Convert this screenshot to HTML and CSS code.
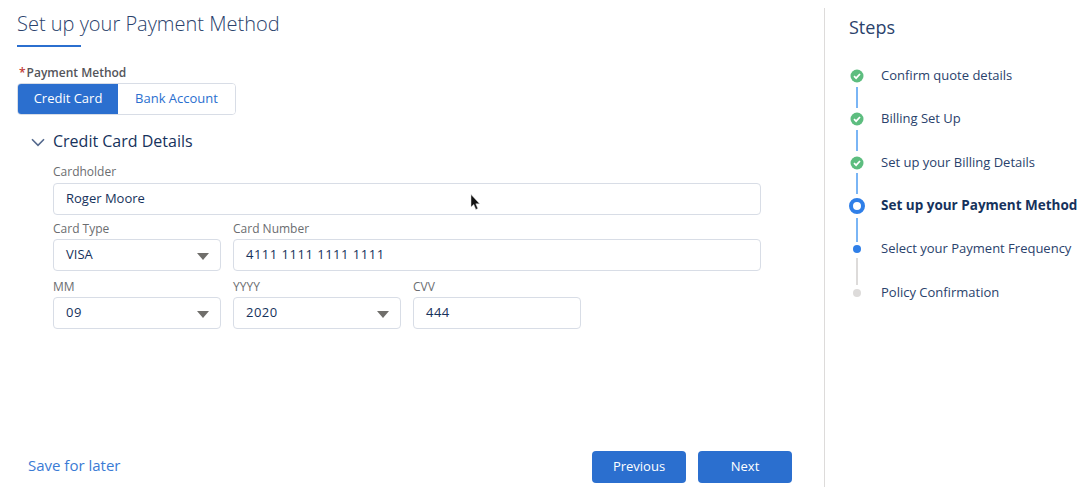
FILE: index.html
```html
<!DOCTYPE html>
<html lang="en">
<head>
    <meta charset="UTF-8">
    <meta name="viewport" content="width=device-width, initial-scale=1.0">
    <title>Set up your Payment Method</title>
    <link rel="stylesheet" href="styles.css">
</head>
<body>
    <div class="app">
        <main class="main">
            <h1 class="title">Set up your Payment Method</h1>
            <div class="title-line"></div>

            <div class="method-label"><span class="required">*</span>Payment Method</div>
            <div class="toggle">
                <button class="toggle-btn active">Credit Card</button>
                <button class="toggle-btn">Bank Account</button>
            </div>

            <div class="section-head">
                <svg class="chevron" width="14" height="9" viewBox="0 0 14 9"><path d="M1 1.2 7 7.4 13 1.2" fill="none" stroke="#54698d" stroke-width="1.6"/></svg>
                <h2>Credit Card Details</h2>
            </div>

            <div class="form">
                <div class="row">
                    <div class="field wide">
                        <label>Cardholder</label>
                        <div class="input">Roger Moore</div>
                    </div>
                </div>
                <div class="row">
                    <div class="field small">
                        <label>Card Type</label>
                        <div class="input select">VISA<span class="arrow"></span></div>
                    </div>
                    <div class="field wide">
                        <label>Card Number</label>
                        <div class="input digits">4111 1111 1111 1111</div>
                    </div>
                </div>
                <div class="row">
                    <div class="field small">
                        <label>MM</label>
                        <div class="input select digits">09<span class="arrow"></span></div>
                    </div>
                    <div class="field small">
                        <label>YYYY</label>
                        <div class="input select digits">2020<span class="arrow"></span></div>
                    </div>
                    <div class="field small">
                        <label>CVV</label>
                        <div class="input digits">444</div>
                    </div>
                </div>
            </div>

            <footer class="footer">
                <a class="save" href="#">Save for later</a>
                <div class="nav">
                    <button class="nav-btn prev">Previous</button>
                    <button class="nav-btn next">Next</button>
                </div>
            </footer>
        </main>

        <aside class="steps">
            <h2 class="steps-title">Steps</h2>
            <ul class="step-list">
                <li class="step done blue-line">
                    <span class="dot"><svg width="14" height="14" viewBox="0 0 14 14"><circle cx="7" cy="7" r="6.5" fill="#5dbd7f"/><path d="M4 7.2 6.1 9.2 10 5" fill="none" stroke="#fff" stroke-width="1.7"/></svg></span>
                    Confirm quote details
                </li>
                <li class="step done blue-line">
                    <span class="dot"><svg width="14" height="14" viewBox="0 0 14 14"><circle cx="7" cy="7" r="6.5" fill="#5dbd7f"/><path d="M4 7.2 6.1 9.2 10 5" fill="none" stroke="#fff" stroke-width="1.7"/></svg></span>
                    Billing Set Up
                </li>
                <li class="step done blue-line">
                    <span class="dot"><svg width="14" height="14" viewBox="0 0 14 14"><circle cx="7" cy="7" r="6.5" fill="#5dbd7f"/><path d="M4 7.2 6.1 9.2 10 5" fill="none" stroke="#fff" stroke-width="1.7"/></svg></span>
                    Set up your Billing Details
                </li>
                <li class="step current blue-line">
                    <span class="dot"><span class="ring"></span></span>
                    Set up your Payment Method
                </li>
                <li class="step next-step grey-line">
                    <span class="dot"><span class="small-dot blue"></span></span>
                    Select your Payment Frequency
                </li>
                <li class="step">
                    <span class="dot"><span class="small-dot grey"></span></span>
                    Policy Confirmation
                </li>
            </ul>
        </aside>

        <svg class="cursor" width="11" height="17" viewBox="0 0 11 17"><path d="M1 0.5V13L3.8 10.4 5.8 15.4 7.8 14.6 5.8 9.8H9.6Z" fill="#111" stroke="#ddd" stroke-width="0.5"/></svg>
    </div>
</body>
</html>
```

FILE: styles.css
```css
*{
    box-sizing: border-box;
}
body{
    margin: 0;
    padding: 0;
    background-color: #fff;
    font-family: "Open Sans", Arial, sans-serif;
    color: #16325c;
}
.app{
    position: relative;
    display: flex;
    width: 1084px;
    height: 497px;
    padding: 8px 0 10px 0;
    overflow: hidden;
}

.main{
    display: flex;
    flex-direction: column;
    width: 825px;
    padding-left: 17px;
    border-right: 1px solid #dddbda;
}
.title{
    margin: 0;
    font-size: 20px;
    font-weight: 300;
    line-height: 32px;
    color: #2a426c;
}
.title-line{
    width: 64px;
    height: 2px;
    margin-top: 5px;
    background-color: #2b6fcf;
}
.method-label{
    margin-top: 18px;
    font-size: 12px;
    font-weight: 600;
    line-height: 16px;
    color: #54555a;
}
.required{
    margin: 0 1px 0 2px;
    color: #c23934;
}
.toggle{
    display: flex;
    width: 219px;
    height: 32px;
    margin-top: 2px;
    border: 1px solid #d8dde6;
    border-radius: 4px;
    overflow: hidden;
}
.toggle-btn{
    padding: 0 0 2px 0;
    border: 0;
    font-family: inherit;
    font-size: 13px;
    background-color: #fff;
    color: #2b6fcf;
    flex: 1;
}
.toggle-btn.active{
    flex: 0 0 100px;
    background-color: #2b6fcf;
    color: #fff;
}

.section-head{
    display: flex;
    align-items: center;
    height: 26px;
    margin-top: 13px;
    padding-left: 14px;
}
.chevron{
    margin-top: 2px;
}
.section-head h2{
    margin: 0 0 0 8px;
    font-size: 16px;
    font-weight: 400;
    color: #16325c;
}

.form{
    margin: 8px 0 0 36px;
}
.row{
    display: flex;
    gap: 12px;
    width: 708px;
    margin-bottom: 6px;
}
.row:first-child{
    margin-bottom: 4px;
}
.row:first-child label{
    margin-bottom: 1px;
}
.field{
    display: flex;
    flex-direction: column;
}
.field.wide{
    flex: 1;
}
.field.small{
    width: 168px;
}
.field label{
    font-size: 12px;
    line-height: 20px;
    color: #6b6d70;
}
.input{
    position: relative;
    height: 32px;
    padding-left: 12px;
    border: 1px solid #d8dde6;
    border-radius: 4px;
    font-size: 13px;
    line-height: 29px;
    color: #16325c;
}
.digits{
    letter-spacing: 0.5px;
}
.arrow{
    position: absolute;
    right: 11px;
    top: 13px;
    width: 0;
    height: 0;
    border-left: 6px solid transparent;
    border-right: 6px solid transparent;
    border-top: 7px solid #706e6b;
}

.footer{
    display: flex;
    justify-content: space-between;
    align-items: center;
    margin-top: auto;
    padding: 0 32px 4px 11px;
}
.save{
    margin-bottom: 4px;
    font-size: 15px;
    color: #3a7bd5;
    text-decoration: none;
}
.nav{
    display: flex;
    gap: 12px;
}
.nav-btn{
    width: 94px;
    height: 32px;
    padding: 0 0 2px 0;
    border: 0;
    border-radius: 4px;
    font-family: inherit;
    font-size: 13px;
    background-color: #2b6fcf;
    color: #fff;
}

.steps{
    flex: 1;
    padding-left: 24px;
}
.steps-title{
    margin: 7px 0 0 0;
    font-size: 18px;
    font-weight: 400;
    line-height: 24px;
    color: #2a426c;
}
.step-list{
    margin: 14.1px 0 0 0;
    padding: 0;
    list-style: none;
}
.step{
    position: relative;
    display: flex;
    align-items: center;
    height: 43.4px;
    font-size: 13px;
    color: #2a426c;
    white-space: nowrap;
}
.step.current{
    font-size: 13.5px;
    font-weight: 700;
    color: #16325c;
}
.dot{
    display: flex;
    justify-content: center;
    align-items: center;
    width: 16px;
    margin: 2px 16px 0 0;
}
.blue-line::after,
.grey-line::after{
    content: "";
    position: absolute;
    left: 7px;
    top: 33.5px;
    width: 2px;
    height: 21px;
    background-color: #7ab5f5;
}
.current::after{
    top: 34.5px;
    height: 24px;
}
.grey-line::after{
    top: 31px;
    height: 27px;
    background-color: #dddbda;
}
.ring{
    width: 16px;
    height: 16px;
    border: 4.5px solid #2f7fe8;
    border-radius: 50%;
}
.small-dot{
    width: 8px;
    height: 8px;
    border-radius: 50%;
}
.small-dot.blue{
    background-color: #2f7fe8;
}
.small-dot.grey{
    background-color: #dddbda;
}

.cursor{
    position: absolute;
    left: 470px;
    top: 194px;
}
```
